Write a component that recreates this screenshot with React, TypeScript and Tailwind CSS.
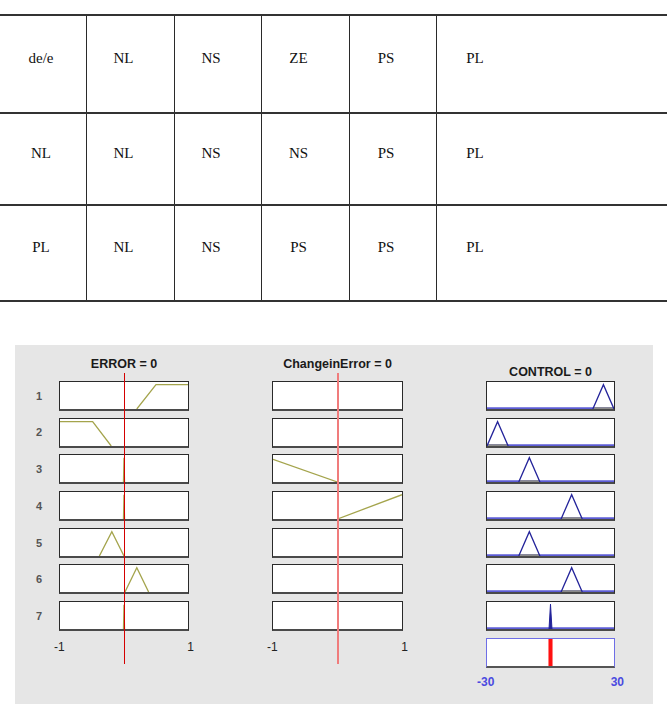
import React from "react";

type Pt = [number, number];

type BoxSpec = {
  line?: Pt[];
  spike?: number;
  bar?: number;
};

const header = ["de/e", "NL", "NS", "ZE", "PS", "PL"];
const rows = [
  { h: "h-[98px]", cells: header },
  { h: "h-[92px]", cells: ["NL", "NL", "NS", "NS", "PS", "PL"] },
  { h: "h-[96px]", cells: ["PL", "NL", "NS", "PS", "PS", "PL"] },
];

const tri = (a: number, b: number, c: number): Pt[] => [
  [a, 0],
  [b, 1],
  [c, 0],
];

const errorBoxes: BoxSpec[] = [
  { line: [[0.2, 0], [0.5, 1], [1, 1]] },
  { line: [[-1, 1], [-0.49, 1], [-0.2, 0]] },
  { line: tri(-0.008, 0, 0.008) },
  { line: tri(-0.008, 0, 0.008) },
  { line: tri(-0.385, -0.19, 0) },
  { line: tri(0.015, 0.2, 0.385) },
  { line: tri(-0.008, 0, 0.008) },
];

const changeBoxes: BoxSpec[] = [
  {},
  {},
  { line: [[-1, 0.93], [0, 0]] },
  { line: [[0, 0], [1, 1]] },
  {},
  {},
  {},
];

const controlBoxes: BoxSpec[] = [
  { line: tri(20, 25, 30) },
  { line: tri(-30, -25, -20) },
  { line: tri(-15, -10, -5) },
  { line: tri(5, 10, 15) },
  { line: tri(-15, -10, -5) },
  { line: tri(5, 10, 15) },
  { spike: 0 },
];

function mapX(x: number, lo: number, hi: number) {
  return ((x - lo) / (hi - lo)) * 100;
}
function mapY(y: number) {
  return 100 - y * 90;
}

function Plot({
  spec,
  lo,
  hi,
  color,
  baseline,
}: {
  spec: BoxSpec;
  lo: number;
  hi: number;
  color: string;
  baseline?: boolean;
}) {
  const pts = spec.line
    ? spec.line.map(([x, y]) => `${mapX(x, lo, hi)},${mapY(y)}`).join(" ")
    : "";
  const base = spec.line ? spec.line.filter((p) => p[1] === 0) : [];
  return (
    <svg viewBox="0 0 100 100" preserveAspectRatio="none" className="block w-full h-full">
      {baseline && (
        <line x1="0" y1="97" x2="100" y2="97" stroke="#5c5cd6" strokeWidth={2} vectorEffect="non-scaling-stroke" />
      )}
      {baseline && base.length === 2 && (
        <line
          x1={mapX(base[0][0], lo, hi)}
          y1="97"
          x2={mapX(base[1][0], lo, hi)}
          y2="97"
          stroke="#8a8a8a"
          strokeWidth={2}
          vectorEffect="non-scaling-stroke"
        />
      )}
      {spec.line && (
        <polyline
          points={pts}
          fill="none"
          stroke={color}
          strokeWidth={1.3}
          strokeLinejoin="miter"
          vectorEffect="non-scaling-stroke"
        />
      )}
      {spec.spike !== undefined && (
        <polygon
          points={`${mapX(spec.spike - 0.7, lo, hi)},100 ${mapX(spec.spike, lo, hi)},8 ${mapX(spec.spike + 0.7, lo, hi)},100`}
          fill={color}
          stroke={color}
          strokeWidth={1}
          vectorEffect="non-scaling-stroke"
        />
      )}
      {spec.bar !== undefined && (
        <rect x={mapX(spec.bar, lo, hi) - 1.6} y="0" width="3.2" height="100" fill="#ff1010" />
      )}
    </svg>
  );
}

function Box({ children, blue }: { children: React.ReactNode; blue?: boolean }) {
  return (
    <div
      className={
        blue
          ? "h-[30px] bg-white border border-[#6e6ee6] border-b-[2px] border-b-[#555]"
          : "h-[30px] bg-white border border-[#2a2a2a] border-b-[2px] border-b-[#4a4a4a]"
      }
    >
      {children}
    </div>
  );
}

function Column({
  title,
  titleClass,
  boxes,
  lo,
  hi,
  color,
  lineColor,
  loLabel,
  hiLabel,
  labelClass,
  baseline,
  extra,
}: {
  title: string;
  titleClass: string;
  boxes: BoxSpec[];
  lo: number;
  hi: number;
  color: string;
  lineColor?: string;
  loLabel: string;
  hiLabel: string;
  labelClass: string;
  baseline?: boolean;
  extra?: React.ReactNode;
}) {
  return (
    <div className="relative flex flex-col">
      <div className={titleClass}>{title}</div>
      <div className="flex flex-col gap-[6.7px]">
        {boxes.map((b, i) => (
          <Box key={i}>
            <Plot spec={b} lo={lo} hi={hi} color={color} baseline={baseline} />
          </Box>
        ))}
        {extra}
      </div>
      <div className={labelClass}>
        <span>{loLabel}</span>
        <span>{hiLabel}</span>
      </div>
      {lineColor && (
        <div className={`absolute left-[65px] top-[16px] h-[291px] ${lineColor}`} />
      )}
    </div>
  );
}

export default function App() {
  return (
    <div className="w-[667px] h-[704px] bg-white overflow-hidden">
      {/* rule table */}
      <div className="mt-[14px] border-t-2 border-[#333] text-[15px] text-[#111] [font-family:'Liberation_Serif',serif]">
        {rows.map((r, ri) => (
          <div
            key={ri}
            className={`grid grid-cols-[86px_88px_87px_88px_87px_1fr] border-b-2 border-[#333] ${r.h}`}
          >
            {r.cells.map((c, ci) => (
              <div
                key={ci}
                className={
                  ci === 0
                    ? "flex items-center justify-center pb-[12px] pr-[4px]"
                    : ci === 5
                    ? "flex items-center border-l-[1.5px] border-[#2a2a2a] pb-[12px]"
                    : "flex items-center justify-center border-l-[1.5px] border-[#2a2a2a] pb-[12px] pr-[14px]"
                }
              >
                {ci === 5 ? <span className="w-[76px] text-center">{c}</span> : c}
              </div>
            ))}
          </div>
        ))}
      </div>

      {/* rule viewer panel */}
      <div className="mt-[43px] ml-[15px] w-[638px] h-[359px] bg-[#e6e6e6] pt-[12px] flex [font-family:'Liberation_Sans',Arial,sans-serif]">
        <div className="w-[44px] pl-[4px] flex flex-col pt-[24px] gap-[6.7px] text-[11px] font-bold text-[#555]">
          {[1, 2, 3, 4, 5, 6, 7].map((n) => (
            <div key={n} className="h-[30px] flex items-center justify-center">
              {n}
            </div>
          ))}
        </div>
        <div className="w-[130px]">
          <Column
            title="ERROR = 0"
            titleClass="h-[14px] leading-[14px] mb-[10px] text-center text-[12.5px] font-bold text-[#1a1a1a]"
            boxes={errorBoxes}
            lo={-1}
            hi={1}
            color="#a4a44c"
            lineColor="w-[1px] bg-[#d40000]"
            loLabel="-1"
            hiLabel="1"
            labelClass="-mx-[5px] mt-[9px] flex justify-between h-[14px] leading-[14px] text-[12px] text-[#222]"
          />
        </div>
        <div className="w-[131px] ml-[83px]">
          <Column
            title="ChangeinError = 0"
            titleClass="h-[14px] leading-[14px] mb-[10px] text-center text-[12.5px] font-bold text-[#1a1a1a] whitespace-nowrap"
            boxes={changeBoxes}
            lo={-1}
            hi={1}
            color="#a4a44c"
            lineColor="w-[2px] bg-[#f07c7c]"
            loLabel="-1"
            hiLabel="1"
            labelClass="-mx-[5px] mt-[9px] flex justify-between h-[14px] leading-[14px] text-[12px] text-[#222]"
          />
        </div>
        <div className="w-[129px] ml-[83px]">
          <Column
            title="CONTROL = 0"
            titleClass="h-[14px] leading-[14px] mt-[8px] mb-[2px] text-center text-[12.5px] font-bold text-[#1a1a1a] whitespace-nowrap"
            boxes={controlBoxes}
            lo={-30}
            hi={30}
            color="#23239a"
            baseline
            loLabel="-30"
            hiLabel="30"
            labelClass="-mx-[9px] mt-[7px] flex justify-between h-[14px] leading-[14px] text-[12px] font-bold text-[#4a4ae0]"
            extra={
              <Box blue>
                <Plot spec={{ bar: 0 }} lo={-30} hi={30} color="#ff1010" />
              </Box>
            }
          />
        </div>
      </div>
    </div>
  );
}
